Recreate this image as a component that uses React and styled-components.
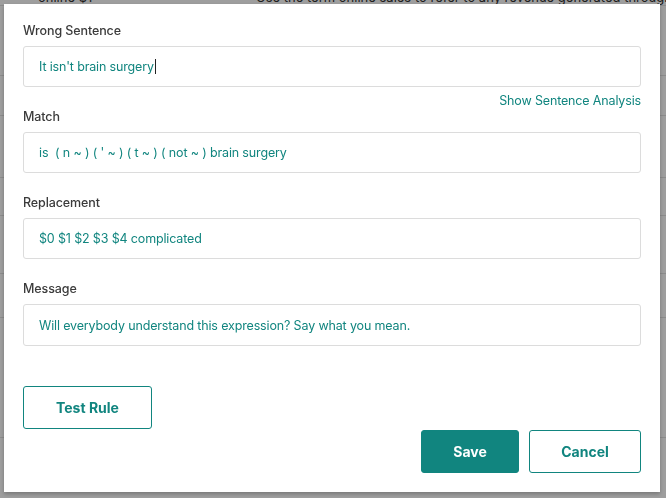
import React from 'react';
import styled, { createGlobalStyle } from 'styled-components';

const GlobalStyle = createGlobalStyle`
  * { box-sizing: border-box; }
  html, body {
    margin: 0;
    padding: 0;
    background: #ffffff;
    font-family: Inter, "Open Sans", "Liberation Sans", sans-serif;
  }
`;

const TEAL = '#11857f';

const Page = styled.div`
  width: 666px;
  height: 498px;
  overflow: hidden;
  background: #ffffff;
  color: #333;
  font-size: 13px;
`;

const BgRow = styled.div`
  display: grid;
  grid-template-columns: 218px 1fr;
  height: ${p => p.$h || 38}px;
  margin-top: ${p => p.$top || 0}px;
  border-bottom: 1px solid #e2e2e2;
  padding-left: 38px;
  align-items: end;
  white-space: nowrap;
  color: #333;
`;

const Overlay = styled.div`
  position: fixed;
  inset: 0;
  background: rgba(0, 0, 0, 0.38);
  display: flex;
  align-items: flex-start;
  justify-content: flex-start;
  padding: 4px 0 0 4px;
`;

const Modal = styled.div`
  width: 656px;
  height: 488px;
  background: #ffffff;
  box-shadow: 0 2px 4px rgba(0, 0, 0, 0.25);
  padding: 19px 19px 19px 19px;
  display: flex;
  flex-direction: column;
`;

const Field = styled.div`
  display: flex;
  flex-direction: column;
  margin-bottom: ${p => (p.$tight ? 1 : 22)}px;
`;

const Label = styled.div`
  font-size: 12.5px;
  letter-spacing: -0.1px;
  line-height: 16px;
  font-weight: 500;
  color: #3b3b3b;
  margin-bottom: 7px;
`;

const InputBox = styled.div`
  height: ${p => p.$h || 41}px;
  border: 1px solid #dcdcdc;
  border-radius: 3px;
  padding: 0 15px;
  display: flex;
  align-items: center;
  font-size: 12.5px;
  letter-spacing: -0.15px;
  color: ${TEAL};
  white-space: pre;
`;

const Caret = styled.span`
  display: inline-block;
  width: 1px;
  height: 15px;
  background: #222;
  margin-left: 1px;
`;

const LinkRow = styled.div`
  display: flex;
  justify-content: flex-end;
  margin-top: 7px;
  line-height: 14px;
`;

const TextLink = styled.a`
  font-size: 12.5px;
  letter-spacing: -0.15px;
  color: ${TEAL};
  cursor: pointer;
  text-decoration: none;
`;

const Footer = styled.div`
  margin-top: 18px;
  display: flex;
  flex-direction: column;
`;

const Actions = styled.div`
  display: flex;
  justify-content: flex-end;
  gap: 10px;
  margin-top: 1px;
`;

const Button = styled.button`
  width: ${p => p.$w}px;
  height: 43px;
  border-radius: 3px;
  border: 1px solid ${TEAL};
  background: ${p => (p.$primary ? TEAL : '#ffffff')};
  color: ${p => (p.$primary ? '#ffffff' : TEAL)};
  font-family: inherit;
  font-size: 14px;
  font-weight: 700;
  cursor: pointer;
  padding: 0;
`;

export default function App() {
  return (
    <>
      <GlobalStyle />
      <Page>
        <BgRow $top={-30} $h={36}>
          <span>online $1</span>
          <span>Use the term online sales to refer to any revenue generated through online channels.</span>
        </BgRow>
        <BgRow $h={70} />
        <BgRow $h={40} />
        <BgRow $h={62} />
        <BgRow $h={38} />
        <BgRow $h={58} />
        <BgRow $h={44} />
        <BgRow $h={120} />
      </Page>
      <Overlay>
        <Modal>
          <Field $tight>
            <Label>Wrong Sentence</Label>
            <InputBox>
              It isn't brain surgery<Caret />
            </InputBox>
            <LinkRow>
              <TextLink>Show Sentence Analysis</TextLink>
            </LinkRow>
          </Field>
          <Field>
            <Label>Match</Label>
            <InputBox>{"is  ( n ~ ) ( ' ~ ) ( t ~ ) ( not ~ ) brain surgery"}</InputBox>
          </Field>
          <Field>
            <Label>Replacement</Label>
            <InputBox>$0 $1 $2 $3 $4 complicated</InputBox>
          </Field>
          <Field>
            <Label>Message</Label>
            <InputBox $h={42}>Will everybody understand this expression? Say what you mean.</InputBox>
          </Field>
          <Footer>
            <Button $w={129}>Test Rule</Button>
            <Actions>
              <Button $primary $w={98}>Save</Button>
              <Button $w={112}>Cancel</Button>
            </Actions>
          </Footer>
        </Modal>
      </Overlay>
    </>
  );
}
